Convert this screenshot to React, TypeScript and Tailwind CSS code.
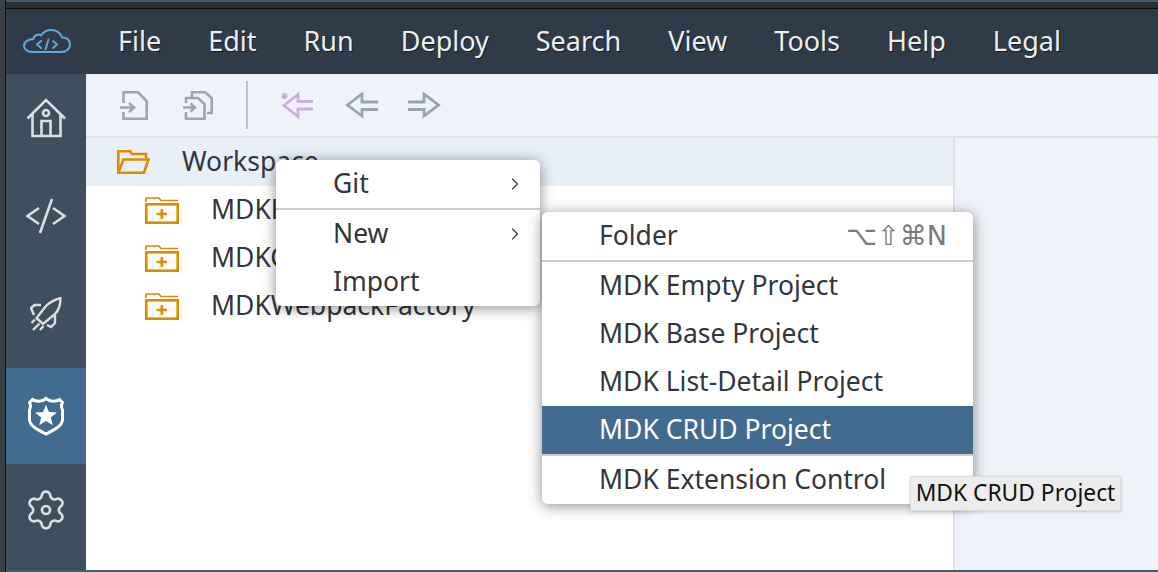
import React from 'react';
import { ChevronRight } from 'lucide-react';

const menuItems = ['File', 'Edit', 'Run', 'Deploy', 'Search', 'View', 'Tools', 'Help', 'Legal'];

const CloudLogo = () => (
  <svg width="50" height="26" viewBox="0 0 50 26" fill="none" stroke="#62a9d9" strokeWidth="2" strokeLinejoin="round" strokeLinecap="round">
    <path d="M11 24 H39 C44.5 24 48 20.5 48 16.5 C48 12 44.5 9 40 9.5 C38 4.5 34 2 29 2 C24 2 21 4.5 19 7.5 C16.5 5.5 12 7 11.5 11 C6 11.5 2 14 2 18 C2 21.5 6 24 11 24 Z" />
    <path d="M19 13 L15 16.5 L19 20 M31 13 L35 16.5 L31 20 M26.5 11.5 L23.5 21.5" />
  </svg>
);

const HomeIcon = () => (
  <svg width="40" height="40" viewBox="0 0 40 40" fill="none" stroke="#dcdfe2" strokeWidth="2.6">
    <path d="M1.5 20.5 L20 2 L39 20.5" />
    <path d="M6.5 16 V38 H34.5 V16" />
    <circle cx="20" cy="15" r="3" />
    <path d="M15.5 38 V23 H24.5 V38" />
  </svg>
);

const CodeIcon = () => (
  <svg width="40" height="36" viewBox="0 0 40 36" fill="none" stroke="#dcdfe2" strokeWidth="2.6">
    <path d="M13 10 L1.5 18 L13 26 M27 10 L38.5 18 L27 26 M26 1 L14 35" />
  </svg>
);

const RocketIcon = () => (
  <svg width="32" height="34" viewBox="0 0 32 34" fill="none" stroke="#dcdfe2" strokeWidth="2.4">
    <path d="M30.5 1 C24 3 20 5 16 9 L6.5 21 L13 27 L25 17 C29 13 30.5 8 30.5 1 Z" />
    <path d="M11 8 H4.5 L1 11 L4 18 M25 17 V26 L21 30 L17 28" />
    <path d="M1.5 26 L5 22.5 M3 33 L9.5 26.5 M10 33 L13.5 29" />
  </svg>
);

const ShieldIcon = () => (
  <svg width="36" height="40" viewBox="0 0 36 40" fill="none" stroke="#ffffff" strokeWidth="3">
    <path d="M18 2.5 C14 6 8 6 4.5 3.5 L1.5 6.5 C3 9 2.5 12 1.5 14 V24 C2 30 10 34 18 38 C26 34 34 30 34.5 24 V14 C33.5 12 33 9 34.5 6.5 L31.5 3.5 C28 6 22 6 18 2.5 Z" />
    <polygon
      points="18,8.5 20.9,16 28.9,16.4 22.8,21.5 24.8,29.3 18,25 11.2,29.3 13.2,21.5 7.1,16.4 15.1,16"
      fill="#ffffff"
      stroke="none" />
  </svg>
);

const GearIcon = () => (
  <svg width="44" height="44" viewBox="0 0 24 24" fill="none" stroke="#dcdfe2" strokeWidth="1.45" strokeLinejoin="round">
    <path d="M9.671 4.136a2.34 2.34 0 0 1 4.659 0 2.34 2.34 0 0 0 3.319 1.915 2.34 2.34 0 0 1 2.33 4.033 2.34 2.34 0 0 0 0 3.831 2.34 2.34 0 0 1-2.33 4.033 2.34 2.34 0 0 0-3.319 1.915 2.34 2.34 0 0 1-4.659 0 2.34 2.34 0 0 0-3.32-1.915 2.34 2.34 0 0 1-2.33-4.033 2.34 2.34 0 0 0 0-3.831A2.34 2.34 0 0 1 6.35 6.051a2.34 2.34 0 0 0 3.319-1.915" />
    <circle cx="12" cy="12" r="2.2" />
  </svg>
);

const FolderOpen = () => (
  <svg width="33" height="24" viewBox="0 0 33 24" fill="none" stroke="#e08a00" strokeWidth="2.6">
    <path d="M1.3 22.7 V1.3 H13 L15 4 H29 V8" />
    <path d="M1.3 22.7 H27 L31.5 9.5 H6.5 L1.3 22.7 Z" />
  </svg>
);

const FolderPlus = () => (
  <svg width="34" height="27" viewBox="0 0 34 27" fill="none" stroke="#e08a00" strokeWidth="2.6">
    <path d="M1 5 V1 H14 L16 3.5 H33" strokeWidth="1.6" />
    <rect x="1.3" y="7.3" width="31.4" height="18.4" />
    <path d="M11.5 17 H22 M16.8 12 V22" />
  </svg>
);

const ImportFile = () => (
  <svg width="28" height="29" viewBox="0 0 28 29" fill="none" stroke="#9aa7b0" strokeWidth="2.6">
    <path d="M3.5 12 V1.3 H18 L26.7 10 V27.7 H3.5 V21" />
    <path d="M0 16.5 H13 M9 12 L14 16.5 L9 21" />
  </svg>
);

const ImportFiles = () => (
  <svg width="30" height="29" viewBox="0 0 30 29" fill="none" stroke="#9aa7b0" strokeWidth="2.6">
    <path d="M9 6 V1.3 H22 L28.7 7 V22 H24" />
    <path d="M3 12 V7 H15 L21.5 13 V27.7 H3 V21" />
    <path d="M0 16.5 H11 M7.5 12.5 L12 16.5 L7.5 20.5" />
  </svg>
);

const NewBack = () => (
  <svg width="32" height="27" viewBox="0 0 32 27" fill="none" stroke="#c8b2dc" strokeWidth="2.8">
    <path d="M32 9.5 H17 V2.5 L3 13.5 L17 24.5 V17 H32" />
    <circle cx="3.5" cy="4" r="3" fill="#c8b2dc" stroke="none" />
  </svg>
);

const ArrowBack = () => (
  <svg width="33" height="27" viewBox="0 0 33 27" fill="none" stroke="#97a4ad" strokeWidth="2.8">
    <path d="M33 10 H17 V2 L2.5 13 L17 24 V17.5 H33" />
  </svg>
);

const ArrowForward = () => (
  <svg width="33" height="27" viewBox="0 0 33 27" fill="none" stroke="#97a4ad" strokeWidth="2.8">
    <path d="M0 10 H16 V2 L30.5 13 L16 24 V17.5 H0" />
  </svg>
);

const ContextItem = ({ label, arrow }: { label: string; arrow?: boolean }) => (
  <div className="flex h-12 items-center justify-between pl-[57px] pr-[15px]">
    <span>{label}</span>
    {arrow && <ChevronRight className="h-[20px] w-[20px] text-[#32363a]" strokeWidth={1.3} />}
  </div>
);

const App = () => {
  return (
    <div className="relative flex h-[572px] w-[1158px] overflow-hidden bg-[#2f3b49] font-['Noto_Sans',sans-serif] text-[26.5px] text-[#32363a]">
      <div className="h-full w-[6px] border-r border-[#111] bg-[#3a3f44]" />
      <div className="flex flex-1 flex-col">
        {/* window top edge */}
        <div className="h-[9px] border-t-2 border-b border-t-[#4b5a69] border-b-[#0c0c0c] bg-[#2a2e33]" />

        {/* Menu bar */}
        <div className="flex h-[65px] items-center pl-[16px] text-[27px] text-[#eceef0] [text-shadow:1px_1px_0_#161d25]">
          <div className="mr-[46px] mt-[-2px]"><CloudLogo /></div>
          <div className="flex items-center gap-[47px]">
            {menuItems.map((item) => (
              <span key={item}>{item}</span>
            ))}
          </div>
        </div>

        <div className="flex min-h-0 flex-1">
          {/* Side nav */}
          <div className="flex w-[80px] flex-col bg-[#3e4f60]">
            <div className="flex h-[102px] items-center justify-center pb-[14px]"><HomeIcon /></div>
            <div className="flex h-[96px] items-center justify-center pb-[16px]"><CodeIcon /></div>
            <div className="flex h-[96px] items-center justify-center pb-[12px]"><RocketIcon /></div>
            <div className="flex h-[96px] items-center justify-center bg-[#426b90]"><ShieldIcon /></div>
            <div className="flex h-[92px] items-center justify-center"><GearIcon /></div>
          </div>

          <div className="flex min-w-0 flex-1 flex-col">
            {/* Toolbar */}
            <div className="flex h-[64px] items-center border-b-2 border-[#dde0e5] bg-[#eff3f9] pl-[34px]">
              <ImportFile />
              <div className="ml-[35px]"><ImportFiles /></div>
              <div className="ml-[33px] h-[48px] w-[2px] bg-[#bfc2c5]" />
              <div className="ml-[33px]"><NewBack /></div>
              <div className="ml-[32px]"><ArrowBack /></div>
              <div className="ml-[30px]"><ArrowForward /></div>
            </div>

            <div className="flex min-h-0 flex-1">
              {/* Workspace tree */}
              <div className="flex-1 bg-white">
                <div className="flex h-12 items-center bg-[#e8eff7] pl-[31px]">
                  <FolderOpen />
                  <span className="ml-[32px]">Workspace</span>
                </div>
                {['MDKProject', 'MDKCrud', 'MDKWebpackFactory'].map((name) => (
                  <div key={name} className="flex h-12 items-center pl-[59px]">
                    <FolderPlus />
                    <span className="ml-[32px]">{name}</span>
                  </div>
                ))}
              </div>
              <div className="w-[205px] border-l-2 border-[#dde0e5] bg-[#eff3f9]" />
            </div>
          </div>
        </div>
        <div className="h-[2px] bg-[#475c6a]" />
      </div>

      {/* Context menu */}
      <div className="absolute left-[276px] top-[160px] w-[264px] rounded-[6px] bg-white shadow-[0_2px_14px_rgba(0,0,0,0.45)]">
        <ContextItem label="Git" arrow />
        <div className="h-[2px] bg-[#cccccc]" />
        <ContextItem label="New" arrow />
        <ContextItem label="Import" />
      </div>

      {/* New submenu */}
      <div className="absolute left-[542px] top-[212px] w-[431px] overflow-hidden rounded-[6px] bg-white shadow-[0_2px_14px_rgba(0,0,0,0.45)]">
        <div className="flex h-12 items-center justify-between pl-[57px] pr-[26px]">
          <span>Folder</span>
          <span className="font-['DejaVu_Sans',sans-serif] text-[27px] text-[#7a7a7a]">⌥⇧⌘N</span>
        </div>
        <div className="h-[2px] bg-[#cccccc]" />
        <ContextItem label="MDK Empty Project" />
        <ContextItem label="MDK Base Project" />
        <ContextItem label="MDK List-Detail Project" />
        <div className="flex h-12 items-center bg-[#426b90] pl-[57px] text-white">MDK CRUD Project</div>
        <div className="h-[2px] bg-[#cccccc]" />
        <ContextItem label="MDK Extension Control" />
      </div>

      {/* Tooltip */}
      <div className="absolute left-[910px] top-[476px] flex h-[35px] w-[211px] items-center justify-center border border-[#dcdcdc] bg-[#ececec] text-[22.8px] text-[#111] shadow-[0_1px_3px_rgba(0,0,0,0.2)]">
        MDK CRUD Project
      </div>
    </div>);
};

export default App;
